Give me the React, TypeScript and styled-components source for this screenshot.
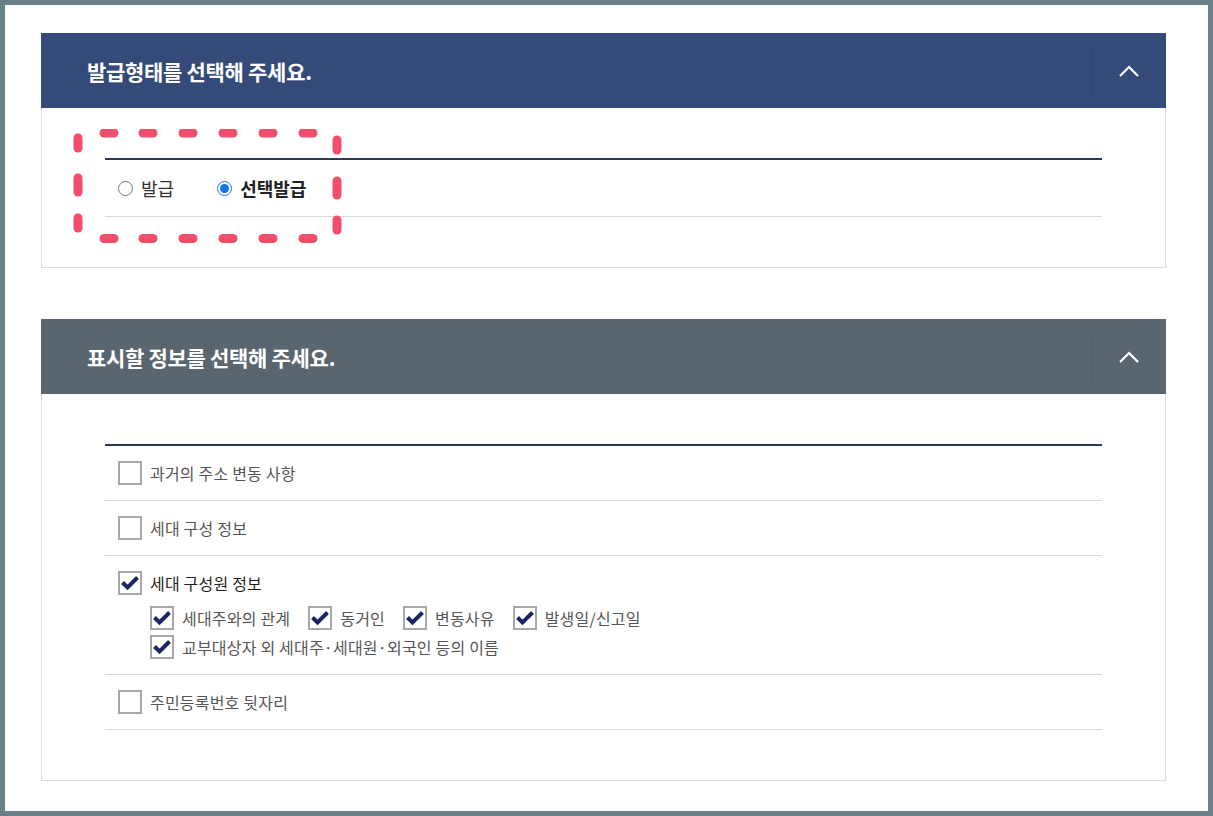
import React from "react";
import styled, { createGlobalStyle } from "styled-components";

const GlobalStyle = createGlobalStyle`
    html, body {
        margin: 0;
        padding: 0;
        background: #ffffff;
    }
    * {
        box-sizing: border-box;
    }
    body {
        font-family: "Noto Sans CJK KR", "Noto Sans", sans-serif;
        color: #333;
    }
`;

const Frame = styled.div`
    width: 1213px;
    height: 816px;
    border: 5px solid #6a8189;
    background: #fff;
    padding: 28px 42px 0 36px;
    overflow: hidden;
`;

const Section = styled.section`
    width: 1125px;
    & + & {
        margin-top: 51px;
    }
`;

const Header = styled.div<{ tone: "navy" | "slate" }>`
    height: 75px;
    display: flex;
    align-items: center;
    background: ${({ tone }) => (tone === "navy" ? "#344b79" : "#59666f")};
`;

const Title = styled.h2`
    flex: 1;
    margin: 0;
    padding-left: 46px;
    font-size: 21px;
    font-weight: 700;
    letter-spacing: -0.3px;
    color: #fff;
`;

const Divider = styled.span<{ tone: "navy" | "slate" }>`
    width: 1px;
    height: 48px;
    background: ${({ tone }) => (tone === "navy" ? "#2e4470" : "#505d6c")};
`;

const ToggleButton = styled.button`
    width: 74px;
    height: 75px;
    border: 0;
    padding: 0;
    background: transparent;
    display: flex;
    align-items: center;
    justify-content: center;
    cursor: pointer;
`;

const Body = styled.div`
    position: relative;
    border: 1px solid #dcdcdc;
    border-top: 0;
    padding: 50px 63px 50px;
`;

const OptionList = styled.ul`
    list-style: none;
    margin: 0;
    padding: 0;
    border-top: 2px solid #2e3a55;
`;

const RadioRow = styled.li`
    height: 57px;
    display: flex;
    align-items: center;
    gap: 43px;
    padding-left: 13px;
    border-bottom: 1px solid #d9d9d9;
`;

const RadioLabel = styled.label<{ checked?: boolean }>`
    display: flex;
    align-items: center;
    gap: 8px;
    font-size: 18px;
    font-weight: ${({ checked }) => (checked ? 700 : 400)};
    color: ${({ checked }) => (checked ? "#222" : "#333")};

    input {
        width: 15px;
        height: 15px;
        margin: 0;
        accent-color: #1a73e8;
    }
`;

const CheckRow = styled.li`
    padding: 15px 13px;
    border-bottom: 1px solid #d9d9d9;
`;

const CheckLine = styled.label`
    display: flex;
    align-items: center;
    gap: 8px;
`;

const Box = styled.span`
    width: 24px;
    height: 24px;
    flex: none;
    border: 2px solid #a8a8a8;
    background: #fff;
    display: flex;
    align-items: center;
    justify-content: center;
`;

const CheckText = styled.span<{ strong?: boolean }>`
    font-size: 16px;
    letter-spacing: 0.2px;
    line-height: 24px;
    color: ${({ strong }) => (strong ? "#1e1e1e" : "#555")};
`;

const SubOptions = styled.div`
    display: flex;
    flex-direction: column;
    gap: 5px;
    margin-top: 11px;
    padding-left: 32px;
`;

const SubLine = styled.div`
    display: flex;
    gap: 18px;
`;

const Highlight = styled.svg`
    position: absolute;
    left: 31px;
    top: 21px;
    pointer-events: none;
`;

const Chevron = () => (
    <svg width="22" height="14" viewBox="0 0 22 14">
        <polyline points="2,12 11,3 20,12" fill="none" stroke="#fff" strokeWidth="2.2" />
    </svg>
);

const CheckBox: React.FC<{ checked?: boolean }> = ({ checked }) => (
    <Box>
        {checked && (
            <svg width="20" height="20" viewBox="0 0 20 20">
                <polyline points="2.5,9.5 7.5,14.5 17.5,4.5" fill="none" stroke="#1b2566" strokeWidth="4" />
            </svg>
        )}
    </Box>
);

const Check: React.FC<{ label: string; checked?: boolean; strong?: boolean }> = ({ label, checked, strong }) => (
    <CheckLine>
        <CheckBox checked={checked} />
        <CheckText strong={strong}>{label}</CheckText>
    </CheckLine>
);

// dashed pink marker drawn around the radio options
const DashedMark = () => {
    const across = [109, 148, 188, 228, 268, 308];
    const left = [144, 186, 224];
    const right = [146, 189, 226];
    const c = "#f14d6c";
    return (
        <Highlight width="280" height="125" viewBox="73 130 280 125">
            <g stroke={c} strokeWidth="9" strokeLinecap="round" fill="none">
                {across.map((x) => (
                    <line key={"t" + x} x1={x - 5} y1={134} x2={x + 5} y2={134} />
                ))}
                {across.map((x) => (
                    <line key={"b" + x} x1={x - 5} y1={239.5} x2={x + 5} y2={239.5} />
                ))}
                {left.map((y, i) => (
                    <line key={"l" + y} x1={78} y1={y - (i === 1 ? 7 : 5)} x2={78} y2={y + (i === 1 ? 7 : 5)} />
                ))}
                {right.map((y, i) => (
                    <line key={"r" + y} x1={337} y1={y - (i === 1 ? 7 : 5)} x2={337} y2={y + (i === 1 ? 7 : 5)} />
                ))}
            </g>
        </Highlight>
    );
};

const subOptions = [
    ["세대주와의 관계", "동거인", "변동사유", "발생일/신고일"],
    ["교부대상자 외 세대주·세대원·외국인 등의 이름"],
];

export default function App() {
    return (
        <>
            <GlobalStyle />
            <Frame>
                <Section>
                    <Header tone="navy">
                        <Title>발급형태를 선택해 주세요.</Title>
                        <Divider tone="navy" />
                        <ToggleButton aria-label="접기">
                            <Chevron />
                        </ToggleButton>
                    </Header>
                    <Body>
                        <OptionList>
                            <RadioRow>
                                <RadioLabel>
                                    <input type="radio" name="issue" />
                                    발급
                                </RadioLabel>
                                <RadioLabel checked>
                                    <input type="radio" name="issue" defaultChecked />
                                    선택발급
                                </RadioLabel>
                            </RadioRow>
                        </OptionList>
                        <DashedMark />
                    </Body>
                </Section>

                <Section>
                    <Header tone="slate">
                        <Title>표시할 정보를 선택해 주세요.</Title>
                        <Divider tone="slate" />
                        <ToggleButton aria-label="접기">
                            <Chevron />
                        </ToggleButton>
                    </Header>
                    <Body>
                        <OptionList>
                            <CheckRow>
                                <Check label="과거의 주소 변동 사항" />
                            </CheckRow>
                            <CheckRow>
                                <Check label="세대 구성 정보" />
                            </CheckRow>
                            <CheckRow>
                                <Check label="세대 구성원 정보" checked strong />
                                <SubOptions>
                                    {subOptions.map((line, i) => (
                                        <SubLine key={i}>
                                            {line.map((label) => (
                                                <Check key={label} label={label} checked />
                                            ))}
                                        </SubLine>
                                    ))}
                                </SubOptions>
                            </CheckRow>
                            <CheckRow>
                                <Check label="주민등록번호 뒷자리" />
                            </CheckRow>
                        </OptionList>
                    </Body>
                </Section>
            </Frame>
        </>
    );
}
